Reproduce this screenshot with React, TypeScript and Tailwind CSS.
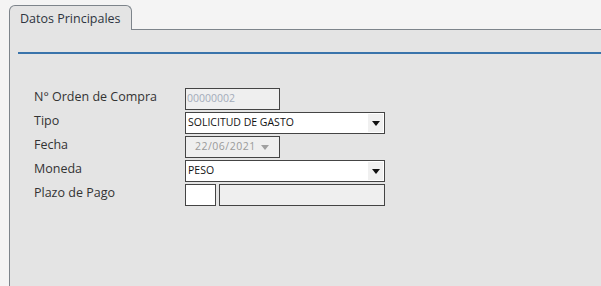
import type { ReactNode } from "react";

const font = { fontFamily: '"Open Sans", "DejaVu Sans", sans-serif' };

function Arrow({ disabled }: { disabled?: boolean }) {
  return (
    <div className={`flex h-full items-center justify-center ${disabled ? "w-[17px] pr-[9px]" : "w-[15px] bg-[#f0f0f0]"}`}>
      <svg width="8" height="5" viewBox="0 0 8 5">
        <path d="M0 0h8L4 5z" fill={disabled ? "#a0a0a0" : "#111"} />
      </svg>
    </div>
  );
}

function Row({ label, children }: { label: string; children: ReactNode }) {
  return (
    <div className="flex h-[22px] items-center">
      <div className="w-[151px] pb-[3px] text-[12.5px] text-[#333]">{label}</div>
      {children}
    </div>
  );
}

export default function App() {
  return (
    <div className="flex h-[286px] w-[601px] flex-col overflow-hidden bg-[#f4f4f4] pl-[9px] pt-[5px]" style={font}>
      <div className="flex h-[25px]">
        <div className="flex h-[25px] w-[123px] items-start rounded-t-[6px] border border-b-0 border-[#7d848b] bg-[#e4e4e4] pl-[10px] pt-[4px] text-[12.5px] text-[#2e3440]">
          Datos Principales
        </div>
        <div className="flex-1 border-b border-[#7d848b]" />
      </div>
      <div className="flex-1 border-l border-[#7d848b] bg-[#e4e4e4] pl-[8px] pt-[22px]">
        <div className="h-[2px] bg-[#3a74ab]" />
        <div className="mt-[34px] flex flex-col gap-[2px] pl-[16px]">
          <Row label="N° Orden de Compra">
            <div className="flex h-[22px] w-[95px] items-center border border-[#444] bg-[#efefef] pl-[1px] text-[10.5px] text-[#a3abba]">
              00000002
            </div>
          </Row>
          <Row label="Tipo">
            <div className="flex h-[22px] w-[200px] items-center border border-[#444] bg-white p-[1px] text-[10.5px] text-[#111]">
              <div className="flex-1 pl-[1px]">SOLICITUD DE GASTO</div>
              <Arrow />
            </div>
          </Row>
          <Row label="Fecha">
            <div className="flex h-[22px] w-[95px] items-center border border-[#444] bg-[#efefef] p-[1px] text-[10.5px] text-[#9a9a9a]">
              <div className="flex-1 pl-[8px] tracking-[0.5px]">22/06/2021</div>
              <Arrow disabled />
            </div>
          </Row>
          <Row label="Moneda">
            <div className="flex h-[22px] w-[200px] items-center border border-[#444] bg-white p-[1px] text-[10.5px] text-[#111]">
              <div className="flex-1 pl-[1px]">PESO</div>
              <Arrow />
            </div>
          </Row>
          <Row label="Plazo de Pago">
            <div className="flex gap-[3px]">
              <div className="h-[22px] w-[31px] border border-[#444] bg-white" />
              <div className="h-[22px] w-[166px] border border-[#444] bg-[#efefef]" />
            </div>
          </Row>
        </div>
      </div>
    </div>
  );
}
